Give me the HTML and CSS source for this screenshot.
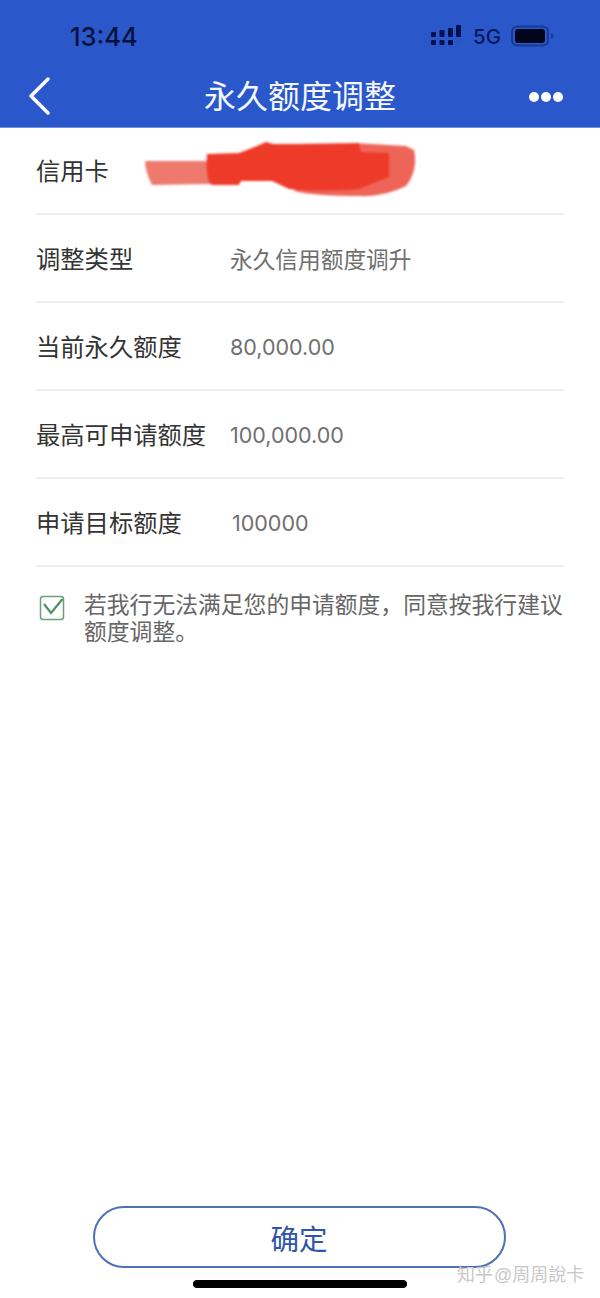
FILE: index.html
```html
<!DOCTYPE html>
<html lang="zh-CN">
<head>
    <meta charset="UTF-8">
    <meta name="viewport" content="width=device-width, initial-scale=1.0">
    <title>永久额度调整</title>
    <link rel="stylesheet" href="styles.css">
</head>
<body>
    <div class="page">
        <header class="header">
            <div class="status-bar">
                <span class="time">13:44</span>
                <div class="status-icons">
                    <svg class="signal" width="32" height="22" viewBox="0 0 32 22">
                        <g fill="#06124f">
                            <rect x="0" y="7" width="5" height="5" rx="1"/>
                            <rect x="0" y="15" width="5" height="5" rx="1"/>
                            <rect x="8.500" y="5" width="5" height="7" rx="1"/>
                            <rect x="8.500" y="15" width="5" height="5" rx="1"/>
                            <rect x="17" y="3" width="5" height="9" rx="1"/>
                            <rect x="17" y="15" width="5" height="5" rx="1"/>
                            <rect x="25" y="0" width="5" height="12" rx="1"/>
                        </g>
                        <rect x="25" y="15" width="5" height="5" rx="1" fill="#2f55b5"/>
                    </svg>
                    <span class="network">5G</span>
                    <svg class="battery" width="44" height="22" viewBox="0 0 44 22">
                        <rect x="1" y="1.500" width="36" height="19" rx="5" fill="none" stroke="#173a94" stroke-width="2"/>
                        <rect x="4" y="4" width="30" height="14" rx="3" fill="#02051c"/>
                        <path d="M40 8 L42.500 10 L42.500 12 L40 14 Z" fill="#173a94"/>
                    </svg>
                </div>
            </div>
            <div class="nav-bar">
                <svg class="back" width="24" height="40" viewBox="0 0 24 40">
                    <path d="M21 3 L4 20 L21 37" fill="none" stroke="#fff" stroke-width="3.500" stroke-linecap="round" stroke-linejoin="round"/>
                </svg>
                <h1 class="title">永久额度调整</h1>
                <div class="more">
                    <span class="dot"></span>
                    <span class="dot"></span>
                    <span class="dot"></span>
                </div>
            </div>
        </header>

        <main class="content">
            <div class="row row-first">
                <span class="label">信用卡</span>
                <svg class="scribble" width="274" height="60" viewBox="0 -3 274 60">
                    <path d="M1 18 L66 18 L66 41 L8 42 C4 34 1 26 1 18 Z" fill="#ee7a6e"/>
                    <path d="M210 0 L262 3 L270 7 C273 20 270 34 262 43 C248 50 230 54 215 53 C190 53 165 52 150 48 Z" fill="#ee6558"/>
                    <path d="M63 11 L95 10 L113 3 L122 -1 L129 1 L150 1 L215 0 L217 9 L245 10 L245 34 L215 46 C190 48 160 48 145 46 L128 38 L97 38 L95 42 L68 42 C63 40 62 25 63 11 Z" fill="#ee3a29"/>
                </svg>
            </div>
            <div class="row">
                <span class="label">调整类型</span>
                <span class="value">永久信用额度调升</span>
            </div>
            <div class="row">
                <span class="label">当前永久额度</span>
                <span class="value value-num">80,000.00</span>
            </div>
            <div class="row">
                <span class="label">最高可申请额度</span>
                <span class="value value-num">100,000.00</span>
            </div>
            <div class="row">
                <span class="label">申请目标额度</span>
                <span class="value value-num value-input">100000</span>
            </div>
            <div class="agree">
                <svg class="check" width="26" height="26" viewBox="0 0 26 26">
                    <rect x="1.500" y="1.500" width="23" height="23" rx="2.500" fill="none" stroke="#6aa176" stroke-width="1.500"/>
                    <path d="M5 9 L12 18 L23.500 4" fill="none" stroke="#4f9160" stroke-width="2.200"/>
                </svg>
                <p class="agree-text">若我行无法满足您的申请额度，同意按我行建议额度调整。</p>
            </div>
        </main>

        <footer class="footer">
            <button class="confirm">确定</button>
            <div class="home-bar"></div>
            <span class="watermark">知乎 @周周說卡</span>
        </footer>
    </div>
</body>
</html>
```

FILE: styles.css
```css
* {
    box-sizing: border-box;
}

body {
    margin: 0;
    background: #fff;
    font-family: "Liberation Sans", "Noto Sans CJK SC", sans-serif;
}

.page {
    height: 1298px;
    display: flex;
    flex-direction: column;
    overflow: hidden;
}

/* Blue top area */
.header {
    height: 128px;
    background: #2a58ca;
    border-bottom: 1px solid #6f93dc;
}

.status-bar {
    height: 72px;
    padding: 0 45px 0 70px;
    display: flex;
    justify-content: space-between;
    align-items: center;
}

.time {
    font-family: "Inter", "Liberation Sans", sans-serif;
    font-size: 25.500px;
    font-weight: 500;
    color: #07123f;
}

.status-icons {
    display: flex;
    align-items: center;
    gap: 10px;
}

.network {
    font-family: "Inter", "Liberation Sans", sans-serif;
    font-size: 20.500px;
    font-weight: 500;
    color: #07175c;
}

.nav-bar {
    height: 55px;
    padding: 0 27px 7px;
    display: grid;
    grid-template-columns: 1fr auto 1fr;
    align-items: center;
}

.title {
    margin: -4px 0 0;
    font-size: 32px;
    font-weight: 400;
    color: #f4f7ff;
}

.more {
    display: flex;
    justify-content: flex-end;
    gap: 2px;
    margin: 1px 10px 0 0;
}

.dot {
    width: 10px;
    height: 10px;
    border-radius: 50%;
    background: #fff;
}

/* Form rows */
.content {
    flex: 1;
    padding: 0 36px;
}

.row {
    height: 88px;
    display: flex;
    align-items: center;
    border-bottom: 2px solid #eeeeee;
}

.row-first {
    height: 87px;
}

.label {
    flex: none;
    width: 194px;
    margin-top: -2px;
    font-size: 24.300px;
    color: #333;
}

.row-first .label {
    width: 108px;
}

.value {
    font-size: 22.700px;
    color: #6f6f6f;
}

.value-num {
    margin-top: 1px;
    font-family: "Inter", "Liberation Sans", sans-serif;
    font-size: 21.500px;
}

.value-input {
    margin-left: 2px;
}

.scribble {
    margin-top: -1px;
    filter: blur(1px);
}

.agree {
    display: flex;
    gap: 19px;
    padding: 25px 0 0 3px;
}

.check {
    flex: none;
    margin-top: 3px;
}

.agree-text {
    margin: 0;
    font-size: 22.800px;
    line-height: 27px;
    color: #666;
}

/* Bottom button */
.footer {
    position: relative;
    height: 92px;
    display: flex;
    flex-direction: column;
    align-items: center;
}

.confirm {
    width: 413px;
    height: 62px;
    margin-left: -2px;
    border: 2px solid #4d71b5;
    border-radius: 31px;
    background: #fff;
    font-family: inherit;
    font-size: 28.500px;
    color: #2f55a8;
}

.home-bar {
    width: 214px;
    height: 8px;
    margin-top: 12px;
    border-radius: 4px;
    background: #000;
}

.watermark {
    position: absolute;
    left: 457px;
    top: 54px;
    font-size: 18px;
    word-spacing: -4px;
    white-space: nowrap;
    color: #c8c8c8;
}
```
